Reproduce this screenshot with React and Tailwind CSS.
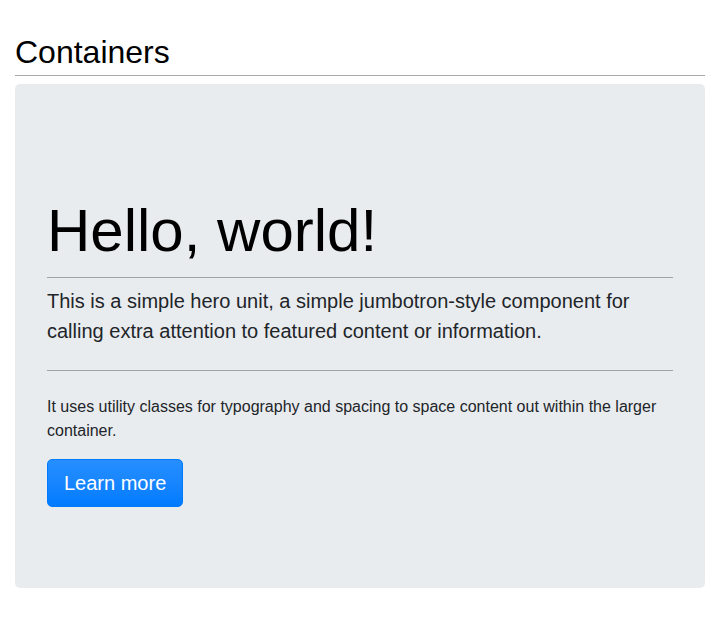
export default function App() {
  return (
    <div className="min-h-[619px] bg-white px-[15px] pt-[33px] font-['Liberation_Sans',Arial,sans-serif] text-[#212529]">
      <h2 className="border-b border-[#aaaaaa] pb-[4px] text-[32px] leading-[38px] text-black">Containers</h2>
      <div className="mt-[8px] rounded-[5px] bg-[#e9ecef] px-[32px] pt-[111px] pb-[81px]">
        <h1 className="text-[60px] leading-[72px] text-black">Hello, world!</h1>
        <hr className="mt-[10px] mb-[8px] border-0 border-t border-[#a0a3a6]" />
        <p className="text-[20px] leading-[30px]">
          This is a simple hero unit, a simple jumbotron-style component for calling extra attention to featured content or information.
        </p>
        <hr className="mt-[24px] mb-[24px] border-0 border-t border-[#a0a3a6]" />
        <p className="text-[16px] leading-[24px]">
          It uses utility classes for typography and spacing to space content out within the larger container.
        </p>
        <a
          href="#"
          className="mt-[16px] inline-block rounded-[5px] border border-[#007bff] bg-gradient-to-b from-[#268fff] to-[#007bff] px-[16px] py-[8px] text-[20px] leading-[30px] text-white"
        >
          Learn more
        </a>
      </div>
    </div>
  );
}
